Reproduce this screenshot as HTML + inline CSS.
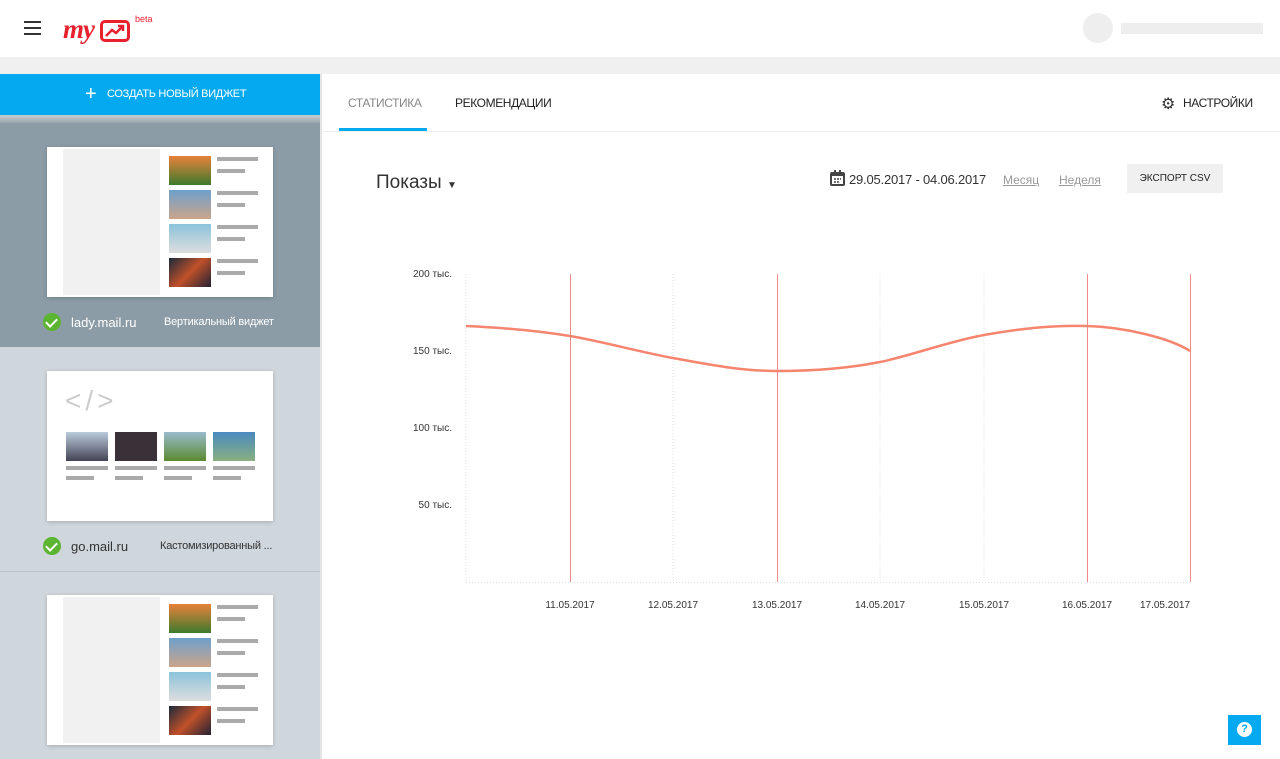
<!DOCTYPE html>
<html><head><meta charset="utf-8"><style>
*{margin:0;padding:0;box-sizing:border-box}
body{width:1280px;height:759px;overflow:hidden;background:#fff;font-family:"Liberation Sans",sans-serif;position:relative;color:#333}
.a{position:absolute}
.bar{position:absolute;background:#aaa;height:4px}
.card{position:absolute;left:47px;width:226px;height:150px;background:#fff;box-shadow:0 1px 4px rgba(0,0,0,.2)}
.ph{position:absolute;width:42px;height:29px}
.lbl{position:absolute;font-size:13px;color:#fff}
.chk{position:absolute;width:18px;height:18px;border-radius:50%;background:#5cb531}
.chk:after{content:"";position:absolute;left:5px;top:3px;width:5px;height:9px;border:solid #fff;border-width:0 2px 2px 0;transform:rotate(45deg)}
.yl{position:absolute;font-size:10px;color:#333;right:828px}
.xl{position:absolute;font-size:10px;color:#333;top:600px;width:70px;text-align:center}
</style></head><body>
<div class="a" style="left:24px;top:21px;width:17px;height:2px;background:#333;box-shadow:0 6px 0 #333,0 12px 0 #333"></div>
<div class="a" style="left:63px;top:14px;font:italic bold 27px 'Liberation Serif',serif;color:#e8212e;letter-spacing:-1px">my</div>
<div class="a" style="left:100px;top:20px;width:30px;height:22px;border:3px solid #e8212e;border-radius:5px"></div>
<svg class="a" style="left:104px;top:24px" width="22" height="14"><path d="M2 12 L8 6 L12 9 L19 2 M14 2 H19 V7" stroke="#e8212e" stroke-width="2.5" fill="none"/></svg>
<div class="a" style="left:135px;top:14px;font-size:9px;color:#e8212e">beta</div>
<div class="a" style="left:1083px;top:13px;width:30px;height:30px;border-radius:50%;background:#eee"></div>
<div class="a" style="left:1121px;top:23px;width:142px;height:11px;background:#eee"></div>
<div class="a" style="left:0;top:57px;width:1280px;height:17px;background:#f0f0f0"></div>
<div class="a" style="left:0;top:74px;width:320px;height:685px;background:#cfd6dc"></div>
<div class="a" style="left:0;top:74px;width:320px;height:41px;background:#04a9f0"></div>
<div class="a" style="left:85px;top:85px;font-size:20px;color:#fff;line-height:18px">+</div>
<div class="a" style="left:107px;top:88px;font-size:11px;color:#fff;letter-spacing:-0.3px">СОЗДАТЬ НОВЫЙ ВИДЖЕТ</div>
<div class="a" style="left:0;top:115px;width:320px;height:8px;background:linear-gradient(#c8cdd1,#9aa6ae)"></div>
<div class="a" style="left:0;top:123px;width:320px;height:224px;background:#8c9ca6"></div>
<div class="a" style="left:0;top:571px;width:320px;height:1px;background:#bcc4ca"></div>
<div class="a" style="left:320px;top:74px;width:2px;height:685px;background:#e5e5e5"></div>

<div class="card" style="top:147px">
<div class="a" style="left:16px;top:2px;width:97px;height:146px;background:#f1f1f1"></div>
<div class="ph" style="left:122px;top:9px;background:linear-gradient(#e8823a,#3d7a2e)"></div>
<div class="ph" style="left:122px;top:43px;background:linear-gradient(#6fa0cc,#caa48a)"></div>
<div class="ph" style="left:122px;top:77px;background:linear-gradient(#8cc4dc,#ddd)"></div>
<div class="ph" style="left:122px;top:111px;background:linear-gradient(135deg,#1a2a3a,#c0502a,#223)"></div>
<div class="bar" style="left:170px;top:10px;width:41px"></div><div class="bar" style="left:170px;top:22px;width:28px"></div>
<div class="bar" style="left:170px;top:44px;width:41px"></div><div class="bar" style="left:170px;top:56px;width:28px"></div>
<div class="bar" style="left:170px;top:78px;width:41px"></div><div class="bar" style="left:170px;top:90px;width:28px"></div>
<div class="bar" style="left:170px;top:112px;width:41px"></div><div class="bar" style="left:170px;top:124px;width:28px"></div>
</div>
<div class="chk" style="left:43px;top:313px"></div>
<div class="lbl" style="left:71px;top:315px">lady.mail.ru</div>
<div class="lbl" style="left:164px;top:316px;font-size:11px;letter-spacing:-0.2px">Вертикальный виджет</div>

<div class="card" style="top:371px">
<div class="a" style="left:18px;top:14px;font-size:28px;color:#ccc;letter-spacing:4px">&lt;/&gt;</div>
<div class="ph" style="left:19px;top:61px;background:linear-gradient(#bcd,#445)"></div>
<div class="ph" style="left:68px;top:61px;background:#3a3038"></div>
<div class="ph" style="left:117px;top:61px;background:linear-gradient(#9bc,#5a8a30)"></div>
<div class="ph" style="left:166px;top:61px;background:linear-gradient(#4a8ac0,#8ab080)"></div>
<div class="bar" style="left:19px;top:95px;width:42px"></div><div class="bar" style="left:19px;top:105px;width:28px"></div>
<div class="bar" style="left:68px;top:95px;width:42px"></div><div class="bar" style="left:68px;top:105px;width:28px"></div>
<div class="bar" style="left:117px;top:95px;width:42px"></div><div class="bar" style="left:117px;top:105px;width:28px"></div>
<div class="bar" style="left:166px;top:95px;width:42px"></div><div class="bar" style="left:166px;top:105px;width:28px"></div>
</div>
<div class="chk" style="left:43px;top:537px"></div>
<div class="lbl" style="left:71px;top:539px;color:#333">go.mail.ru</div>
<div class="lbl" style="left:160px;top:540px;font-size:11px;color:#333;letter-spacing:-0.2px">Кастомизированный ...</div>

<div class="card" style="top:595px">
<div class="a" style="left:16px;top:2px;width:97px;height:146px;background:#f1f1f1"></div>
<div class="ph" style="left:122px;top:9px;background:linear-gradient(#e8823a,#3d7a2e)"></div>
<div class="ph" style="left:122px;top:43px;background:linear-gradient(#6fa0cc,#caa48a)"></div>
<div class="ph" style="left:122px;top:77px;background:linear-gradient(#8cc4dc,#ddd)"></div>
<div class="ph" style="left:122px;top:111px;background:linear-gradient(135deg,#1a2a3a,#c0502a,#223)"></div>
<div class="bar" style="left:170px;top:10px;width:41px"></div><div class="bar" style="left:170px;top:22px;width:28px"></div>
<div class="bar" style="left:170px;top:44px;width:41px"></div><div class="bar" style="left:170px;top:56px;width:28px"></div>
<div class="bar" style="left:170px;top:78px;width:41px"></div><div class="bar" style="left:170px;top:90px;width:28px"></div>
<div class="bar" style="left:170px;top:112px;width:41px"></div><div class="bar" style="left:170px;top:124px;width:28px"></div>
</div>

<div class="a" style="left:348px;top:96px;font-size:12px;color:#888;letter-spacing:-0.4px">СТАТИСТИКА</div>
<div class="a" style="left:339px;top:128px;width:88px;height:3px;background:#04a9f0"></div>
<div class="a" style="left:455px;top:96px;font-size:12px;color:#222;letter-spacing:-0.4px">РЕКОМЕНДАЦИИ</div>
<div class="a" style="left:1161px;top:94px;font-size:16px;color:#333">⚙</div>
<div class="a" style="left:1183px;top:96px;font-size:12px;color:#222;letter-spacing:-0.4px">НАСТРОЙКИ</div>
<div class="a" style="left:322px;top:131px;width:958px;height:1px;background:#eee"></div>

<div class="a" style="left:376px;top:172px;font-size:19px;color:#333">Показы <span style="font-size:10px">▼</span></div>
<svg class="a" style="left:830px;top:170px" width="15" height="16"><rect x="1" y="3" width="13" height="12" rx="1" fill="none" stroke="#444" stroke-width="2"/><rect x="1" y="3" width="13" height="3" fill="#444"/><rect x="4" y="0" width="2" height="4" fill="#444"/><rect x="9" y="0" width="2" height="4" fill="#444"/><path d="M4 9h2M7 9h2M10 9h1M4 12h2M7 12h2" stroke="#444" stroke-width="1.5"/></svg>
<div class="a" style="left:849px;top:172px;font-size:13px;color:#333;letter-spacing:-0.2px">29.05.2017 - 04.06.2017</div>
<div class="a" style="left:1003px;top:173px;font-size:12px;color:#999;text-decoration:underline">Месяц</div>
<div class="a" style="left:1059px;top:173px;font-size:12px;color:#999;text-decoration:underline">Неделя</div>
<div class="a" style="left:1127px;top:164px;width:96px;height:29px;background:#f0f0f0;font-size:10px;color:#222;text-align:center;line-height:29px">ЭКСПОРТ CSV</div>

<div class="yl" style="top:269px">200 тыс.</div>
<div class="yl" style="top:346px">150 тыс.</div>
<div class="yl" style="top:423px">100 тыс.</div>
<div class="yl" style="top:500px">50 тыс.</div>
<svg class="a" style="left:0;top:0" width="1280" height="759">
<g stroke="#ddd" stroke-dasharray="1 2"><path d="M466 274V582M673 274V582M880 274V582M984 274V582M466 582.5H1190"/></g>
<g stroke="#f08a8a"><path d="M570.5 274V582M777.5 274V582M1087.5 274V582M1190.5 274V582"/></g>
<path d="M466 326 C510 328,540 331,570 336 S640 352,673 358 S740 371,777 371 S850 368,880 362 S950 341,984 335 S1050 325,1087 326 S1170 338,1190 351" fill="none" stroke="#f5856f" stroke-width="2.5"/>
</svg>
<div class="xl" style="left:535px">11.05.2017</div>
<div class="xl" style="left:638px">12.05.2017</div>
<div class="xl" style="left:742px">13.05.2017</div>
<div class="xl" style="left:845px">14.05.2017</div>
<div class="xl" style="left:949px">15.05.2017</div>
<div class="xl" style="left:1052px">16.05.2017</div>
<div class="xl" style="left:1130px">17.05.2017</div>

<div class="a" style="left:1228px;top:715px;width:33px;height:30px;background:#04a9f0"></div>
<div class="a" style="left:1237px;top:722px;width:15px;height:15px;border-radius:50%;background:#fff;color:#04a9f0;font-size:11px;font-weight:bold;text-align:center;line-height:15px">?</div>
</body></html>
